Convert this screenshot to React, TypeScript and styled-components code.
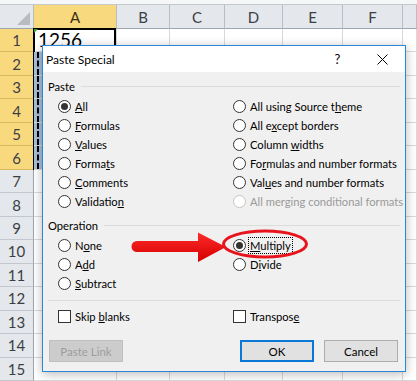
import React from "react";
import styled, { createGlobalStyle } from "styled-components";

const Global = createGlobalStyle`
  html, body { margin: 0; padding: 0; background: #fff; }
  body { width: 417px; height: 381px; overflow: hidden; }
  * { box-sizing: border-box; }
`;

const Page = styled.div`
  position: relative;
  width: 417px;
  height: 381px;
  overflow: hidden;
  background: #fff;
  font-family: Lato, "Liberation Sans", sans-serif;
`;

const TopStrip = styled.div`
  height: 5px;
  background: #f6f7f8;
  border-bottom: 1px solid #c5c9ce;
`;

const Sheet = styled.div`
  display: grid;
  grid-template-columns: 34px 83px 53px 55px 58px 60px 60px 1fr;
  grid-template-rows: 24px repeat(15, 23.47px);
`;

const Corner = styled.div`
  position: relative;
  background: #e4e7eb;
  border-right: 1px solid #b7bcc3;
  border-bottom: 1px solid #9ea5ae;
  &::after {
    content: "";
    position: absolute;
    right: 3px;
    bottom: 3px;
    border-left: 13px solid transparent;
    border-bottom: 13px solid #b9bdc2;
  }
`;

const ColHead = styled.div<{ $sel?: boolean }>`
  display: flex;
  align-items: center;
  justify-content: center;
  font-size: 15px;
  color: ${(p) => (p.$sel ? "#3a2f10" : "#3b3f45")};
  background: ${(p) => (p.$sel ? "#f9d97e" : "#e4e7eb")};
  border-right: 1px solid #b9bec5;
  border-bottom: 1px solid ${(p) => (p.$sel ? "#c49a2a" : "#9ea5ae")};
  padding-top: 1px;
`;

const RowHead = styled.div<{ $sel?: boolean }>`
  display: flex;
  align-items: center;
  justify-content: center;
  font-size: 15px;
  color: #3b3f45;
  background: ${(p) => (p.$sel ? "#f9d97e" : "#e4e7eb")};
  border-right: 1px solid ${(p) => (p.$sel ? "#c49a2a" : "#9ea5ae")};
  border-bottom: 1px solid ${(p) => (p.$sel ? "#d9b95f" : "#c3c7cd")};
`;

const Cell = styled.div<{ $fill?: boolean }>`
  position: relative;
  background: ${(p) => (p.$fill ? "#a7bfd9" : "#fff")};
  border-right: 1px solid #d9d9d9;
  border-bottom: 1px solid #d9d9d9;
  &::before {
    content: ${(p) => (p.$fill ? '""' : "none")};
    position: absolute;
    left: 3px;
    top: 0;
    bottom: 0;
    border-left: 2px dashed #000;
  }
`;

const ActiveCell = styled(Cell)`
  font-size: 19px;
  color: #000;
  padding: 1px 0 0 4px;
  line-height: 20px;
  &::after {
    content: "";
    position: absolute;
    left: 0;
    top: 0;
    border-top: 4px solid #2e9e3a;
    border-right: 4px solid transparent;
  }
`;

const Selection = styled.div`
  position: absolute;
  left: -1px;
  top: -1px;
  width: calc(100% + 1px);
  height: calc(6 * 23.47px + 1px);
  border: 2px solid #000;
  pointer-events: none;
`;

/* ---------- Dialog ---------- */

const Dialog = styled.div`
  position: absolute;
  left: 42px;
  top: 45px;
  width: 364px;
  height: 327px;
  border: 1px solid #2b86d6;
  background: #f0f0f0;
  box-shadow: 0 2px 10px rgba(0, 0, 0, 0.28);
  display: flex;
  flex-direction: column;
  font-family: Lato, "Liberation Sans", sans-serif;
  font-size: 11.2px;
  color: #000;
`;

const TitleBar = styled.div`
  height: 26px;
  background: #fff;
  display: flex;
  align-items: center;
  padding-left: 3px;
`;

const Title = styled.div`
  flex: 1;
  font-size: 12px;
`;

const TitleBtn = styled.div`
  width: 45px;
  height: 26px;
  display: flex;
  align-items: center;
  justify-content: center;
  font-size: 13px;
`;

const Body = styled.div`
  flex: 1;
  display: flex;
  flex-direction: column;
  padding: 6px 5px 8px 5px;
`;

const GroupHead = styled.div<{ $gap?: number }>`
  display: flex;
  align-items: center;
  height: 16px;
  gap: 6px;
  margin-top: ${(p) => p.$gap ?? 0}px;
  &::after {
    content: "";
    flex: 1;
    height: 1px;
    background: #dcdcdc;
  }
`;

const OptGrid = styled.div`
  display: grid;
  grid-template-columns: 175px 1fr;
  align-items: start;
  margin-top: 3px;
  padding-left: 10px;
`;

const OptCol = styled.div`
  display: grid;
  grid-auto-rows: 19px;
`;

const Opt = styled.label<{ $disabled?: boolean }>`
  display: flex;
  align-items: center;
  gap: 4px;
  color: ${(p) => (p.$disabled ? "#9a9a9a" : "#000")};
  white-space: nowrap;
`;

const Radio = styled.span<{ $on?: boolean; $disabled?: boolean }>`
  width: 13px;
  height: 13px;
  border-radius: 50%;
  border: 1px solid ${(p) => (p.$disabled ? "#c4c4c4" : "#333")};
  background: #fff;
  display: flex;
  align-items: center;
  justify-content: center;
  flex: none;
  &::after {
    content: "";
    width: 7px;
    height: 7px;
    border-radius: 50%;
    background: #333;
    display: ${(p) => (p.$on ? "block" : "none")};
  }
`;

const Check = styled.span`
  width: 13px;
  height: 13px;
  border: 1px solid #333;
  background: #fff;
  flex: none;
`;

const Focus = styled.span`
  outline: 1px dotted #000;
  outline-offset: 1px;
`;

const Acc = styled.span`
  text-decoration: underline;
  text-underline-offset: 1px;
`;

const Rule = styled.div<{ $gap: number }>`
  height: 1px;
  background: #dcdcdc;
  margin-top: ${(p) => p.$gap}px;
`;

const CheckRow = styled.div`
  display: grid;
  grid-template-columns: 175px 1fr;
  height: 19px;
  margin-top: 6px;
  padding-left: 10px;
`;

const Buttons = styled.div`
  display: flex;
  margin-top: 14px;
  padding: 0 2px 0 1px;
  gap: 10px;
`;

const Btn = styled.div<{ $kind?: "default" | "disabled" }>`
  width: 74px;
  height: 22px;
  display: flex;
  align-items: center;
  justify-content: center;
  font-size: 11.5px;
  background: ${(p) => (p.$kind === "disabled" ? "#cccccc" : "#e1e1e1")};
  color: ${(p) => (p.$kind === "disabled" ? "#9d9d9d" : "#000")};
  border: ${(p) =>
    p.$kind === "default" ? "2px solid #0a78d7" : p.$kind === "disabled" ? "1px solid #bfbfbf" : "1px solid #adadad"};
`;

const Spacer = styled.div`
  flex: 1;
`;

const Annot = styled.svg`
  position: absolute;
  left: 0;
  top: 0;
  pointer-events: none;
`;

function L({ t, i }: { t: string; i?: number }) {
  if (i === undefined || i < 0) return <span>{t}</span>;
  return (
    <span>
      {t.slice(0, i)}
      <Acc>{t[i]}</Acc>
      {t.slice(i + 1)}
    </span>
  );
}

const leftOpts: [string, number][] = [
  ["All", 0],
  ["Formulas", 0],
  ["Values", 0],
  ["Formats", 5],
  ["Comments", 0],
  ["Validation", 9],
];
const rightOpts: [string, number][] = [
  ["All using Source theme", 18],
  ["All except borders", 5],
  ["Column widths", 7],
  ["Formulas and number formats", 2],
  ["Values and number formats", 3],
];

const cols = ["A", "B", "C", "D", "E", "F", ""];

export default function App() {
  const rows = Array.from({ length: 15 }, (_, i) => i + 1);
  return (
    <Page>
      <Global />
      <TopStrip />
      <Sheet>
        <Corner />
        {cols.map((c, i) => (
          <ColHead key={"h" + i} $sel={c === "A"}>
            {c}
          </ColHead>
        ))}
        {rows.map((r) => (
          <React.Fragment key={r}>
            <RowHead $sel={r <= 6}>{r}</RowHead>
            {cols.map((c, i) =>
              r === 1 && i === 0 ? (
                <ActiveCell key={c + r}>
                  1256
                  <Selection />
                </ActiveCell>
              ) : (
                <Cell key={i + "-" + r} $fill={i === 0 && r >= 2 && r <= 6} />
              )
            )}
          </React.Fragment>
        ))}
      </Sheet>

      <Dialog>
        <TitleBar>
          <Title>Paste Special</Title>
          <TitleBtn>?</TitleBtn>
          <TitleBtn>
            <svg width="11" height="11" viewBox="0 0 11 11">
              <path d="M0.5 0.5 L10.5 10.5 M10.5 0.5 L0.5 10.5" stroke="#000" strokeWidth="1" />
            </svg>
          </TitleBtn>
        </TitleBar>
        <Body>
          <GroupHead>Paste</GroupHead>
          <OptGrid>
            <OptCol>
              {leftOpts.map(([t, i], k) => (
                <Opt key={t}>
                  <Radio $on={k === 0} />
                  <L t={t} i={i} />
                </Opt>
              ))}
            </OptCol>
            <OptCol>
              {rightOpts.map(([t, i]) => (
                <Opt key={t}>
                  <Radio />
                  <L t={t} i={i} />
                </Opt>
              ))}
              <Opt $disabled>
                <Radio $disabled />
                <span>All merging conditional formats</span>
              </Opt>
            </OptCol>
          </OptGrid>

          <GroupHead $gap={6}>Operation</GroupHead>
          <OptGrid>
            <OptCol>
              <Opt>
                <Radio />
                <L t="None" i={1} />
              </Opt>
              <Opt>
                <Radio />
                <L t="Add" i={1} />
              </Opt>
              <Opt>
                <Radio />
                <L t="Subtract" i={0} />
              </Opt>
            </OptCol>
            <OptCol>
              <Opt>
                <Radio $on />
                <Focus>
                  <L t="Multiply" i={0} />
                </Focus>
              </Opt>
              <Opt>
                <Radio />
                <L t="Divide" i={1} />
              </Opt>
            </OptCol>
          </OptGrid>

          <Rule $gap={7} />
          <CheckRow>
            <Opt>
              <Check />
              <span>
                Skip <Acc>b</Acc>lanks
              </span>
            </Opt>
            <Opt>
              <Check />
              <L t="Transpose" i={8} />
            </Opt>
          </CheckRow>

          <Buttons>
            <Btn $kind="disabled">Paste Link</Btn>
            <Spacer />
            <Btn $kind="default">OK</Btn>
            <Btn>Cancel</Btn>
          </Buttons>
        </Body>
      </Dialog>

      <Annot width="417" height="381" viewBox="0 0 417 381">
        <defs>
          <linearGradient id="ar" x1="0" y1="0" x2="0" y2="1">
            <stop offset="0" stopColor="#ff2a2a" />
            <stop offset="1" stopColor="#d40000" />
          </linearGradient>
        </defs>
        <path
          d="M137 241 L198 241 L198 232.5 L226 247 L198 262 L198 252 L137 252 A5.5 5.5 0 0 1 137 241 Z"
          fill="url(#ar)"
        />
        <ellipse cx="265" cy="244" rx="41.5" ry="13" fill="none" stroke="#e8141c" strokeWidth="3" />
      </Annot>
    </Page>
  );
}
